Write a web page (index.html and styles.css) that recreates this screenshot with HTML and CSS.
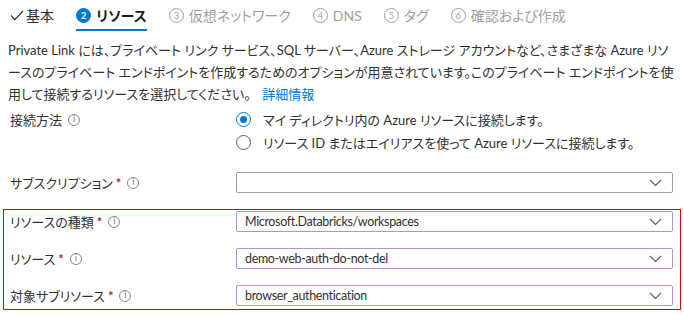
FILE: index.html
```html
<!DOCTYPE html>
<html lang="ja">
<head>
    <meta charset="UTF-8">
    <title>プライベート エンドポイントの作成</title>
    <link rel="stylesheet" href="styles.css">
</head>
<body>

    <!-- ウィザードのタブ -->
    <nav class="tabs">
        <div class="tab done">
            <svg class="check" width="14" height="11" viewBox="0 0 14 11"><path d="M1 5.5 L4.8 9.6 L13 1" fill="none" stroke="#323130" stroke-width="1.2"/></svg>
            <span>基本</span>
        </div>
        <div class="tab active">
            <span class="step">2</span>
            <span>リソース</span>
        </div>
        <div class="tab">
            <span class="step">3</span>
            <span>仮想ネットワーク</span>
        </div>
        <div class="tab">
            <span class="step">4</span>
            <span>DNS</span>
        </div>
        <div class="tab">
            <span class="step">5</span>
            <span>タグ</span>
        </div>
        <div class="tab">
            <span class="step">6</span>
            <span>確認および作成</span>
        </div>
    </nav>

    <p class="intro">
        <span class="line">Private Link には、プライベート リンク サービス、SQL サーバー、Azure ストレージ アカウントなど、さまざまな Azure リソ</span>
        <span class="line">ースのプライベート エンドポイントを作成するためのオプションが用意されています。このプライベート エンドポイントを使</span>
        <span class="line">用して接続するリソースを選択してください。 <a href="#" class="more">詳細情報</a></span>
    </p>

    <div class="form-row method">
        <div class="label">接続方法 <span class="info">i</span></div>
        <div class="radios">
            <label class="radio"><span class="dot checked"></span>マイ ディレクトリ内の Azure リソースに接続します。</label>
            <label class="radio"><span class="dot"></span>リソース ID またはエイリアスを使って Azure リソースに接続します。</label>
        </div>
    </div>

    <div class="form-row subscription">
        <div class="label">サブスクリプション<span class="req">*</span> <span class="info">i</span></div>
        <div class="select plain">
            <span></span>
            <svg class="chevron" width="13" height="8" viewBox="0 0 13 8"><path d="M1 1 L6.5 6.5 L12 1" fill="none" stroke="#605e5c" stroke-width="1.1"/></svg>
        </div>
    </div>

    <!-- 赤枠で囲まれた部分 -->
    <div class="highlight">
        <div class="form-row">
            <div class="label">リソースの種類<span class="req">*</span> <span class="info">i</span></div>
            <div class="select">
                <span class="value">Microsoft.Databricks/workspaces</span>
                <svg class="chevron" width="13" height="8" viewBox="0 0 13 8"><path d="M1 1 L6.5 6.5 L12 1" fill="none" stroke="#605e5c" stroke-width="1.1"/></svg>
            </div>
        </div>
        <div class="form-row">
            <div class="label">リソース<span class="req">*</span> <span class="info">i</span></div>
            <div class="select">
                <span class="value">demo-web-auth-do-not-del</span>
                <svg class="chevron" width="13" height="8" viewBox="0 0 13 8"><path d="M1 1 L6.5 6.5 L12 1" fill="none" stroke="#605e5c" stroke-width="1.1"/></svg>
            </div>
        </div>
        <div class="form-row">
            <div class="label">対象サブリソース<span class="req">*</span> <span class="info">i</span></div>
            <div class="select">
                <span class="value">browser_authentication</span>
                <svg class="chevron" width="13" height="8" viewBox="0 0 13 8"><path d="M1 1 L6.5 6.5 L12 1" fill="none" stroke="#605e5c" stroke-width="1.1"/></svg>
            </div>
        </div>
    </div>

</body>
</html>
```

FILE: styles.css
```css
body {
    margin: 0;
    background-color: #fff;
    color: #323130;
    font-family: Lato, "Noto Sans CJK JP", sans-serif;
    font-size: 13px;
    font-feature-settings: "palt";
}

/* タブ */
.tabs {
    display: flex;
    gap: 22px;
    padding-left: 10px;
    height: 31px;
}

.tab {
    display: flex;
    align-items: center;
    gap: 4px;
    font-size: 14px;
    color: #a19f9d;
    border-bottom: 2px solid transparent;
    box-sizing: border-box;
    height: 31px;
    padding-top: 1px;
}

.tab.done {
    color: #323130;
    gap: 2px;
}

.tab.active {
    color: #201f1e;
    font-weight: bold;
    border-bottom-color: #0078d4;
}

.step {
    display: inline-flex;
    align-items: center;
    justify-content: center;
    width: 13px;
    height: 13px;
    border: 1px solid #a19f9d;
    border-radius: 50%;
    font-size: 9px;
    font-weight: normal;
    margin-right: 1px;
}

.tab.active .step {
    background-color: #0078d4;
    border-color: #0078d4;
    color: #fff;
    font-weight: bold;
}

/* 説明 */
.intro {
    margin: 8px 0 0 8px;
    line-height: 22px;
}

.intro .line {
    display: block;
    white-space: nowrap;
}

.more {
    color: #0078d4;
    text-decoration: none;
    margin-left: 8px;
}

/* フォーム */
.form-row {
    display: grid;
    grid-template-columns: 226px 437px;
    align-items: center;
    padding-left: 10px;
}

.label {
    display: flex;
    align-items: center;
}

.req {
    color: #a4262c;
    margin-left: 3px;
    font-weight: bold;
}

.info {
    display: inline-flex;
    align-items: center;
    justify-content: center;
    width: 10px;
    height: 10px;
    border: 1px solid #8a8886;
    border-radius: 50%;
    font-size: 8px;
    color: #605e5c;
    margin-left: 6px;
    font-family: "DejaVu Sans", sans-serif;
}

.method {
    margin-top: 3px;
    align-items: start;
}

.method .label {
    height: 23px;
}

.radios {
    display: flex;
    flex-direction: column;
}

.radio {
    display: flex;
    align-items: center;
    height: 23px;
    gap: 12px;
}

.dot {
    width: 13px;
    height: 13px;
    border: 1px solid #605e5c;
    border-radius: 50%;
    display: inline-flex;
    align-items: center;
    justify-content: center;
}

.dot.checked {
    border-color: #0078d4;
}

.dot.checked::after {
    content: "";
    width: 7px;
    height: 7px;
    border-radius: 50%;
    background-color: #0078d4;
}

.subscription {
    margin-top: 18px;
}

.select {
    display: flex;
    align-items: center;
    justify-content: space-between;
    height: 21px;
    box-sizing: border-box;
    border: 1px solid #b98fd6;
    border-radius: 2px;
    padding: 0 10px 0 8px;
}

.select .value {
    font-size: 12.5px;
    letter-spacing: -0.35px;
}

.select.plain {
    border-color: #a19f9d;
}

.highlight {
    margin: 16px 0 0 3px;
    width: 678px;
    box-sizing: border-box;
    border: 1px solid #e00000;
    padding: 1px 0 3px 6px;
    display: flex;
    flex-direction: column;
    gap: 16px;
}

.highlight .form-row {
    padding-left: 0;
}
```
